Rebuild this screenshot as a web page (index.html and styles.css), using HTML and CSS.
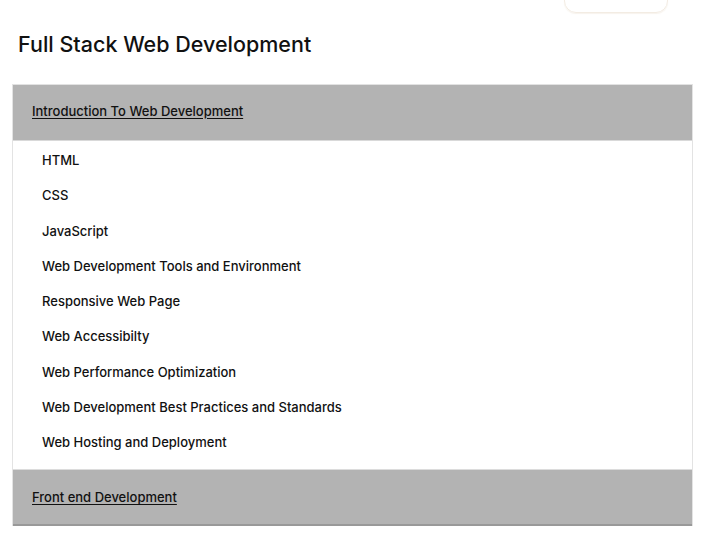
FILE: index.html
```html
<!DOCTYPE html>
<html>
<head>
<meta charset="utf-8">
<link rel="stylesheet" href="styles.css">
</head>
<body>
<div class="topbar"><div class="pill"></div></div>
<h1 class="title">Full Stack Web Development</h1>
<div class="accordion">
  <div class="section open">
    <div class="head"><a href="#">Introduction To Web Development</a></div>
    <ul class="items">
      <li>HTML</li>
      <li>CSS</li>
      <li>JavaScript</li>
      <li>Web Development Tools and Environment</li>
      <li>Responsive Web Page</li>
      <li>Web Accessibilty</li>
      <li>Web Performance Optimization</li>
      <li>Web Development Best Practices and Standards</li>
      <li>Web Hosting and Deployment</li>
    </ul>
  </div>
  <div class="section last">
    <div class="head"><a href="#">Front end Development</a></div>
  </div>
</div>
</body>
</html>
```
FILE: styles.css
```css
* { box-sizing: border-box; }
html, body { margin: 0; padding: 0; background: #fff; }
body { font-family: Inter, "Noto Sans", sans-serif; color: #111; width: 707px; }
.topbar { height: 13px; display: flex; justify-content: flex-end; padding-right: 39px; }
.pill { width: 104px; height: 26px; margin-top: -13px; border: 1px solid #f3ece3; border-radius: 12px; box-shadow: 0 1px 1px rgba(230,215,195,0.3); }
.title { margin: 0; padding: 18px 0 0 18px; height: 71px; font-size: 21.5px; font-weight: 500; line-height: 26px; color: #111; letter-spacing: 0; }
.accordion { margin: 0 14px 0 12px; border-left: 1px solid #e3e3e3; border-right: 1px solid #e3e3e3; }
.head { background: #b3b3b3; height: 57px; display: flex; align-items: center; padding-left: 19px; border-top: 1px solid #e2e2e2; border-bottom: 1px solid #d9d9d9; }
.open .head { padding-bottom: 3px; }
.head a { color: #111; font-size: 13px; font-weight: 500; text-decoration: underline; text-underline-offset: 2px; }
.items { list-style: none; margin: 0; padding: 2px 0 9px 29px; }
.items li { height: 35.25px; line-height: 35.25px; font-size: 13px; font-weight: 500; color: #111; }
.last .head { border-top: 1px solid #dcdcdc; border-bottom: 2px solid #999; height: 57px; }
```
